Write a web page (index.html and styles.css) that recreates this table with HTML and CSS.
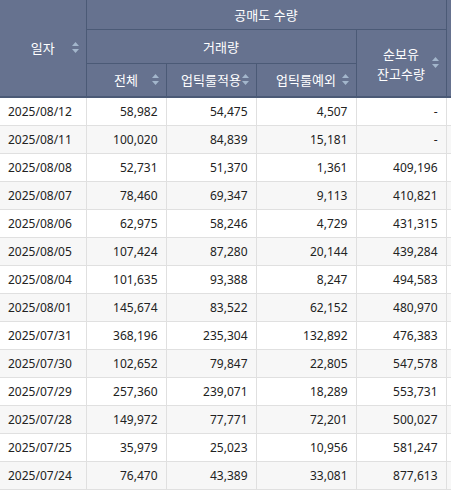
FILE: index.html
```html
<!DOCTYPE html>
<html lang="ko">
<head>
<meta charset="utf-8">
<link rel="stylesheet" href="styles.css">
</head>
<body>
<div class="wrap">
<table class="grid">
  <colgroup>
    <col class="c-date"><col class="c-total"><col class="c-up"><col class="c-ex"><col class="c-bal"><col class="c-more">
  </colgroup>
  <thead>
    <tr class="h1">
      <th rowspan="3" class="sort">일자<span class="si"><svg width="7" height="11" viewBox="0 0 7 11"><path d="M3.5 0L7 4H0z M0 7H7L3.5 11z" fill="#a3b6cc"/></svg></span></th>
      <th colspan="4">공매도 수량</th>
      <th rowspan="3"></th>
    </tr>
    <tr class="h2">
      <th colspan="3">거래량</th>
      <th rowspan="2" class="sort two">순보유<br>잔고수량<span class="si"><svg width="7" height="11" viewBox="0 0 7 11"><path d="M3.5 0L7 4H0z M0 7H7L3.5 11z" fill="#a3b6cc"/></svg></span></th>
    </tr>
    <tr class="h3">
      <th class="sort">전체<span class="si"><svg width="7" height="11" viewBox="0 0 7 11"><path d="M3.5 0L7 4H0z M0 7H7L3.5 11z" fill="#a3b6cc"/></svg></span></th>
      <th class="sort">업틱룰적용<span class="si"><svg width="7" height="11" viewBox="0 0 7 11"><path d="M3.5 0L7 4H0z M0 7H7L3.5 11z" fill="#a3b6cc"/></svg></span></th>
      <th class="sort">업틱룰예외<span class="si"><svg width="7" height="11" viewBox="0 0 7 11"><path d="M3.5 0L7 4H0z M0 7H7L3.5 11z" fill="#a3b6cc"/></svg></span></th>
    </tr>
  </thead>
  <tbody>
    <tr><td>2025/08/12</td><td>58,982</td><td>54,475</td><td>4,507</td><td>-</td><td></td></tr>
    <tr><td>2025/08/11</td><td>100,020</td><td>84,839</td><td>15,181</td><td>-</td><td></td></tr>
    <tr><td>2025/08/08</td><td>52,731</td><td>51,370</td><td>1,361</td><td>409,196</td><td></td></tr>
    <tr><td>2025/08/07</td><td>78,460</td><td>69,347</td><td>9,113</td><td>410,821</td><td></td></tr>
    <tr><td>2025/08/06</td><td>62,975</td><td>58,246</td><td>4,729</td><td>431,315</td><td></td></tr>
    <tr><td>2025/08/05</td><td>107,424</td><td>87,280</td><td>20,144</td><td>439,284</td><td></td></tr>
    <tr><td>2025/08/04</td><td>101,635</td><td>93,388</td><td>8,247</td><td>494,583</td><td></td></tr>
    <tr><td>2025/08/01</td><td>145,674</td><td>83,522</td><td>62,152</td><td>480,970</td><td></td></tr>
    <tr><td>2025/07/31</td><td>368,196</td><td>235,304</td><td>132,892</td><td>476,383</td><td></td></tr>
    <tr><td>2025/07/30</td><td>102,652</td><td>79,847</td><td>22,805</td><td>547,578</td><td></td></tr>
    <tr><td>2025/07/29</td><td>257,360</td><td>239,071</td><td>18,289</td><td>553,731</td><td></td></tr>
    <tr><td>2025/07/28</td><td>149,972</td><td>77,771</td><td>72,201</td><td>500,027</td><td></td></tr>
    <tr><td>2025/07/25</td><td>35,979</td><td>25,023</td><td>10,956</td><td>581,247</td><td></td></tr>
    <tr><td>2025/07/24</td><td>76,470</td><td>43,389</td><td>33,081</td><td>877,613</td><td></td></tr>
  </tbody>
</table>
</div>
</body>
</html>
```

FILE: styles.css
```css
html, body {
  margin: 0;
  padding: 0;
  background: #fff;
}
.wrap {
  width: 451px;
  height: 491px;
  overflow: hidden;
}
.grid {
  border-collapse: collapse;
  table-layout: fixed;
  width: 533px;
  font-family: "Noto Sans", "Noto Sans CJK KR", sans-serif;
  font-size: 12px;
}
.c-date { width: 86px; }
.c-total { width: 80px; }
.c-up { width: 90px; }
.c-ex { width: 100px; }
.c-bal { width: 90px; }
.c-more { width: 87px; }

.grid th {
  background: #66728f;
  color: #fff;
  font-family: "Noto Sans CJK KR", sans-serif;
  font-weight: normal;
  font-size: 13px;
  border: 1px solid #4b5a76;
  padding: 0;
  position: relative;
  text-align: center;
  line-height: 18px;
}
.grid thead tr:first-child th { border-top: 0; }
.grid thead tr th:first-child { border-left: 0; }
.h1 th { height: 29px; }
.h2 th { height: 33px; }
.h3 th { height: 32px; }
.grid th.two { line-height: 20px; padding-top: 2px; }
.grid thead tr.h3 th { border-bottom: 2px solid #4b5a76; }
.grid thead tr.h1 th[rowspan="3"] { border-bottom: 2px solid #4b5a76; }
.grid th.two { border-bottom: 2px solid #4b5a76; }

.si {
  position: absolute;
  right: 7px;
  top: 50%;
  margin-top: -6px;
  width: 7px;
  height: 11px;
  display: block;
}
.si svg { display: block; }

.grid td {
  height: 27px;
  padding: 0 8px;
  border: 1px solid #e0e0e0;
  color: #222;
  text-align: right;
  line-height: 16px;
}
.grid td:first-child {
  text-align: left;
  border-left: 0;
}
.grid tbody tr:nth-child(even) td { background: #f7f7f7; }
```
